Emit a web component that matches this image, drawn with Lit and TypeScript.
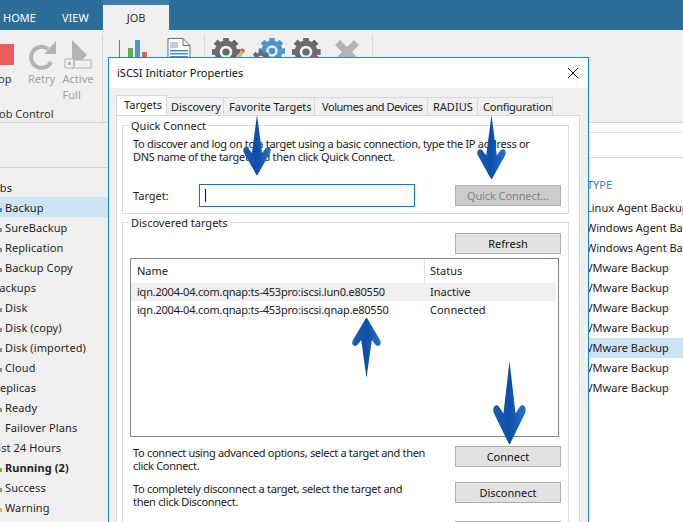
import { LitElement, html, css, svg } from "lit"
import { customElement } from "lit/decorators.js"

type Row = { label: string; tone?: string; active?: boolean; bold?: boolean; shift?: number }

const SIDEBAR: Row[] = [
  { label: "Jobs", shift: -10 },
  { label: "Backup", tone: "blue", active: true },
  { label: "SureBackup", tone: "grey" },
  { label: "Replication", tone: "grey" },
  { label: "Backup Copy", tone: "grey" },
  { label: "Backups", shift: -8 },
  { label: "Disk", tone: "grey" },
  { label: "Disk (copy)", tone: "grey" },
  { label: "Disk (imported)", tone: "grey" },
  { label: "Cloud", tone: "grey" },
  { label: "Replicas", shift: -7 },
  { label: "Ready", tone: "green" },
  { label: "Failover Plans" },
  { label: "Last 24 Hours", shift: -11 },
  { label: "Running (2)", tone: "green", bold: true },
  { label: "Success", tone: "green" },
  { label: "Warning", tone: "amber" },
]

const TYPES = [
  "Linux Agent Backup",
  "Windows Agent Backup",
  "Windows Agent Backup",
  "VMware Backup",
  "VMware Backup",
  "VMware Backup",
  "VMware Backup",
  "VMware Backup",
  "VMware Backup",
  "VMware Backup",
]

const TABS = ["Discovery", "Favorite Targets", "Volumes and Devices", "RADIUS", "Configuration"]

// ribbon gear: ring plus eight teeth, with a solid hub
const gear = (cx: number, cy: number, r: number, fill: string) => svg`
  ${[0, 45, 90, 135, 180, 225, 270, 315].map(
    (a) => svg`<rect x=${cx - r * 0.24} y=${cy - r * 1.22} width=${r * 0.48} height=${r * 0.5} fill=${fill}
      transform="rotate(${a} ${cx} ${cy})" />`,
  )}
  <circle cx=${cx} cy=${cy} r=${r * 0.74} fill="none" stroke=${fill} stroke-width=${r * 0.42} />
  <circle cx=${cx} cy=${cy} r=${r * 0.3} fill=${fill} />
`

@customElement("app-root")
export class AppRoot extends LitElement {
  static styles = css`
    :host {
      display: block;
      position: relative;
      width: 683px;
      height: 522px;
      overflow: hidden;
      background: #f0f0f0;
      font-family: "Noto Sans", "Open Sans", sans-serif;
      font-size: 11px;
      color: #1a1a1a;
    }

    .menu {
      display: flex;
      height: 30px;
      background: #2c6d99;
      padding-left: 3px;
      box-sizing: border-box;
    }
    .menu-tab {
      color: #fff;
      line-height: 35px;
      width: 59px;
    }
    .menu-tab.view {
      width: 41px;
    }
    .menu-tab.job {
      width: 66px;
      height: 30px;
      box-sizing: border-box;
      background: #f0f0f0;
      border-top: 5px solid #3f7dab;
      color: #333;
      text-align: center;
      line-height: 25px;
    }

    .ribbon {
      display: flex;
      height: 92px;
      border-bottom: 1px solid #d4d4d4;
    }
    .ribbon-group {
      display: flex;
      flex-direction: column;
      width: 103px;
      height: 88px;
      margin-top: 4px;
      box-sizing: border-box;
      border-right: 1px solid #d9d9d9;
    }
    .ribbon-buttons {
      display: flex;
      flex: none;
      height: 72px;
    }
    .ribbon-button {
      display: flex;
      flex-direction: column;
      align-items: center;
      line-height: 16px;
      color: #a0a0a0;
    }
    .ribbon-button svg {
      display: block;
      margin-top: 6px;
      margin-bottom: 1px;
    }
    .ribbon-button.stop {
      width: 27px;
      align-items: flex-start;
      color: #333;
    }
    .stop-square {
      width: 14px;
      height: 21px;
      margin: 10px 0 6px;
      background: #eb5d5d;
    }
    .stop-label {
      margin-left: -12px;
    }
    .ribbon-button.retry {
      width: 29px;
    }
    .ribbon-button.full {
      width: 44px;
    }
    .ribbon-caption {
      margin-left: -4px;
      line-height: 16px;
      color: #333;
      white-space: nowrap;
    }
    .ribbon-tools {
      display: flex;
      width: 102px;
      height: 88px;
      margin-top: 4px;
      padding: 4px 0 0 16px;
      gap: 18px;
      box-sizing: border-box;
      border-right: 1px solid #d9d9d9;
    }
    .ribbon-gears {
      display: flex;
      width: 168px;
      height: 88px;
      margin-top: 4px;
      padding: 4px 0 0 7px;
      gap: 7px;
      box-sizing: border-box;
      border-right: 1px solid #d9d9d9;
    }

    .content {
      display: flex;
      height: 399px;
    }
    .sidebar {
      width: 330px;
      flex: none;
      padding-top: 44px;
      box-sizing: border-box;
    }
    .sidebar-head {
      border-top: 1px solid #d4d4d4;
      height: 9px;
    }
    .side-row {
      display: flex;
      align-items: center;
      height: 20px;
      white-space: nowrap;
      letter-spacing: 0.1px;
      color: #1f1f1f;
    }
    .side-row.active {
      background: #cde4f7;
    }
    .side-row.bold {
      font-weight: 700;
    }
    .side-dot {
      width: 2px;
      height: 4px;
      margin: 6px 3px 0 0;
      flex: none;
    }
    .side-dot.blue {
      background: #3a8fd0;
    }
    .side-dot.grey {
      background: #8a8a8a;
    }
    .side-dot.green {
      background: #6cb33f;
    }
    .side-dot.amber {
      background: #e5b13a;
    }
    .main {
      flex: 1;
      background: #fff;
    }
    .main-strip {
      height: 9px;
      border-bottom: 1px solid #e2e2e2;
    }
    .main-head {
      height: 24px;
      border-bottom: 1px solid #d9d9d9;
    }
    .type-head {
      height: 40px;
      line-height: 54px;
      padding-left: 257px;
      color: #3e7dab;
    }
    .type-row {
      height: 20px;
      line-height: 20px;
      padding-left: 256px;
      white-space: nowrap;
    }
    .type-row.active {
      background: #cde4f7;
    }

    .dialog {
      position: absolute;
      left: 108px;
      top: 57px;
      width: 481px;
      height: 480px;
      box-sizing: border-box;
      border: 1px solid #1883d7;
      background: #f0f0f0;
    }
    .dialog-title {
      display: flex;
      align-items: center;
      justify-content: space-between;
      height: 30px;
      padding: 0 10px 2px 8px;
      box-sizing: border-box;
      background: #fff;
      color: #111;
    }
    .dialog-title svg {
      display: block;
      margin-top: 1px;
    }
    .tabs {
      display: flex;
      align-items: flex-end;
      height: 27px;
      padding-left: 7px;
    }
    .tab {
      height: 18px;
      line-height: 17px;
      padding: 0 0 0 5px;
      box-sizing: border-box;
      border: 1px solid #d9d9d9;
      border-bottom: 0;
      border-left: 0;
      white-space: nowrap;
    }
    .tab.active {
      width: 51px;
      height: 20px;
      line-height: 18px;
      background: #fff;
      border-left: 1px solid #d9d9d9;
      padding-left: 7px;
    }
    .tab.t1 {
      width: 57px;
      padding-left: 4px;
    }
    .tab.t2 {
      width: 91px;
    }
    .tab.t3 {
      width: 113px;
      padding-left: 7px;
      letter-spacing: -0.45px;
    }
    .tab.t4 {
      width: 50px;
    }
    .tab.t5 {
      width: 75px;
      letter-spacing: -0.2px;
    }
    .panel {
      margin-left: 7px;
      width: 464px;
      height: 430px;
      box-sizing: border-box;
      padding: 9px 10px 0 5px;
      background: #fff;
      border: 1px solid #d9d9d9;
    }
    .group-box {
      position: relative;
      border: 1px solid #dcdcdc;
      box-sizing: border-box;
    }
    .legend {
      position: absolute;
      left: 6px;
      top: -8px;
      padding: 0 2px;
      line-height: 16px;
      background: #fff;
    }
    .quick {
      height: 89px;
      padding: 11px 7px 0 10px;
      line-height: 13px;
      white-space: nowrap;
    }
    .quick-text {
      letter-spacing: -0.3px;
    }
    .target-row {
      display: flex;
      align-items: center;
      margin-top: 21px;
    }
    .target-label {
      width: 66px;
    }
    .target-input {
      display: flex;
      align-items: center;
      width: 216px;
      height: 23px;
      box-sizing: border-box;
      border: 1px solid #0078d7;
      padding-left: 5px;
    }
    .caret {
      width: 1px;
      height: 13px;
      background: #111;
    }
    .btn {
      display: flex;
      flex: none;
      align-items: center;
      justify-content: center;
      width: 106px;
      height: 21px;
      box-sizing: border-box;
      border: 1px solid #adadad;
      background: #e1e1e1;
      color: #111;
    }
    .btn.disabled {
      background: #cccccc;
      color: #838383;
      letter-spacing: -0.1px;
    }
    .target-row .btn {
      margin-left: 40px;
    }
    .discovered {
      margin-top: 8px;
      height: 340px;
      padding: 10px 7px 0 7px;
    }
    .refresh-row {
      display: flex;
      justify-content: flex-end;
    }
    .list {
      width: 429px;
      height: 179px;
      margin-top: 4px;
      box-sizing: border-box;
      border: 1px solid #82829a;
      padding: 0 2px 0 0;
    }
    .list-row {
      display: grid;
      grid-template-columns: 293px 1fr;
      height: 17.5px;
      line-height: 17px;
      letter-spacing: -0.22px;
    }
    .list-row span {
      padding-left: 6px;
      white-space: nowrap;
    }
    .list-row span + span {
      letter-spacing: 0;
    }
    .list-head {
      height: 24px;
      line-height: 24px;
      letter-spacing: 0;
    }
    .list-head span + span {
      border-left: 1px solid #e5e5e5;
      padding-left: 5px;
    }
    .list-row.selected {
      background: #f0f0f0;
    }
    .actions {
      margin-top: 9px;
    }
    .action {
      display: flex;
      justify-content: space-between;
      align-items: flex-start;
      height: 36px;
      padding-left: 3px;
      line-height: 13px;
    }
    .action.last {
      margin-top: 3px;
    }
    .action p {
      margin: 0;
      white-space: nowrap;
      letter-spacing: -0.3px;
    }

    .arrow {
      position: absolute;
      display: block;
      pointer-events: none;
    }
  `

  private arrow(x: number, y: number, w: number, h: number, up = false) {
    const style = `left:${x}px;top:${y}px;width:${w}px;height:${h}px;${up ? "transform:scaleY(-1);" : ""}`
    return html`<svg class="arrow" style=${style} viewBox="0 0 30 60" preserveAspectRatio="none">
      <defs>
        <linearGradient id="arrow-fill" x1="0" x2="1" y1="0" y2="0">
          <stop offset="0" stop-color="#1c5cb4" />
          <stop offset="0.5" stop-color="#0b4fa9" />
          <stop offset="1" stop-color="#2f72cc" />
        </linearGradient>
      </defs>
      <path
        d="M15 0 L20.5 38 L24.5 33 Q27 31 29 33 Q30.5 35 29 38 L15.5 60 L14.5 60 L1 38 Q-.5 35 1 33 Q3 31 5.500 33 L9.5 38 Z"
        fill="url(#arrow-fill)"
      />
    </svg>`
  }

  render() {
    return html`
      <div class="menu">
        <div class="menu-tab">HOME</div>
        <div class="menu-tab view">VIEW</div>
        <div class="menu-tab job">JOB</div>
      </div>
      <div class="ribbon">
        <div class="ribbon-group">
          <div class="ribbon-buttons">
            <div class="ribbon-button stop">
              <div class="stop-square"></div>
              <div class="stop-label">Stop</div>
            </div>
            <div class="ribbon-button retry">
              <svg width="30" height="30" viewBox="0 0 30 30">
                <path d="M24 22a10.500 10.500 0 1 1-3-13" fill="none" stroke="#b3b3b3" stroke-width="4" />
                <path d="M17 14h12V1z" fill="#b3b3b3" />
              </svg>
              <div>Retry</div>
            </div>
            <div class="ribbon-button full">
              <svg width="30" height="30" viewBox="0 0 30 30">
                <path d="M9 0l15 15-15 15z" fill="#b3b3b3" />
                <path d="M2 19h9v9H2zM11 20h17v8H11z" fill="#f0f0f0" stroke="#b3b3b3" />
                <path d="M5 22h3v3H5z" fill="#b3b3b3" />
              </svg>
              <div>Active<br />Full</div>
            </div>
          </div>
          <div class="ribbon-caption">Job Control</div>
        </div>
        <div class="ribbon-tools">
          <svg width="30" height="24" viewBox="0 0 30 24">
            <path d="M0 2h1v22H0z" fill="#777" />
            <path d="M9 10h5v14H9z" fill="#5cb04a" />
            <path d="M16 2h5v22h-5z" fill="#4a97d0" />
            <path d="M23 14h5v10h-5z" fill="#d9654a" />
          </svg>
          <svg width="25" height="24" viewBox="0 0 25 24">
            <path d="M1 .5h15l7 7V24H1z" fill="#fff" stroke="#6a6a6a" />
            <path d="M16 .5v7h7" fill="none" stroke="#6a6a6a" />
            <path d="M3 4h8v6H3z" fill="#b5d2ec" />
            <path d="M3 12h18v1.500H3zM3 15h18v1.500H3zM3 18h18v1.500H3zM3 21h18v1.500H3z" fill="#3f8fd0" />
          </svg>
        </div>
        <div class="ribbon-gears">
          <svg width="33" height="24" viewBox="0 0 33 24">
            ${gear(14, 14, 12, "#6a6a6a")}
            <path d="M21 22l8-9 3 2-8 9z" fill="#e6b45e" />
            <path d="M28 12l2-2 3 2-1 3z" fill="#d9654a" />
          </svg>
          <svg width="33" height="24" viewBox="0 0 33 24">
            ${gear(20, 13, 11, "#4a97d0")} ${gear(9, 22, 8, "#6a6a6a")}
          </svg>
          <svg width="33" height="24" viewBox="0 0 33 24">
            ${gear(14, 14, 12, "#6a6a6a")}
            <circle cx="22" cy="24" r="7" fill="#e0404a" />
          </svg>
          <svg width="30" height="24" viewBox="0 0 30 24">
            <path d="M3 7l5-5 7 7 7-7 5 5-7 7 7 7-5 5-7-7-7 7-5-5 7-7z" fill="#b3b3b3" />
          </svg>
        </div>
      </div>
      <div class="content">
        <div class="sidebar">
          <div class="sidebar-head"></div>
          ${SIDEBAR.map(
            (r) => html`<div class="side-row ${r.active ? "active" : ""} ${r.bold ? "bold" : ""}">
              ${r.shift
                ? html`<span style="margin-left:${r.shift}px">${r.label}</span>`
                : html`<span class="side-dot ${r.tone ?? ""}"></span><span>${r.label}</span>`}
            </div>`,
          )}
        </div>
        <div class="main">
          <div class="main-strip"></div>
          <div class="main-head"></div>
          <div class="type-head">TYPE</div>
          ${TYPES.map((t, i) => html`<div class="type-row ${i === 7 ? "active" : ""}">${t}</div>`)}
        </div>
      </div>

      <div class="dialog">
        <div class="dialog-title">
          <span>iSCSI Initiator Properties</span>
          <svg width="10" height="10" viewBox="0 0 10 10">
            <path d="M0 0l10 10M10 0L0 10" stroke="#111" fill="none" />
          </svg>
        </div>
        <div class="tabs">
          <div class="tab active">Targets</div>
          ${TABS.map((t, i) => html`<div class="tab t${i + 1}">${t}</div>`)}
        </div>
        <div class="panel">
          <div class="group-box quick">
            <div class="legend">Quick Connect</div>
            <div class="quick-text">
              To discover and log on to a target using a basic connection, type the IP address or<br />
              DNS name of the target and then click Quick Connect.
            </div>
            <div class="target-row">
              <div class="target-label">Target:</div>
              <div class="target-input"><div class="caret"></div></div>
              <div class="btn disabled">Quick Connect...</div>
            </div>
          </div>
          <div class="group-box discovered">
            <div class="legend">Discovered targets</div>
            <div class="refresh-row"><div class="btn">Refresh</div></div>
            <div class="list">
              <div class="list-row list-head"><span>Name</span><span>Status</span></div>
              <div class="list-row selected">
                <span>iqn.2004-04.com.qnap:ts-453pro:iscsi.lun0.e80550</span><span>Inactive</span>
              </div>
              <div class="list-row">
                <span>iqn.2004-04.com.qnap:ts-453pro:iscsi.qnap.e80550</span><span>Connected</span>
              </div>
            </div>
            <div class="actions">
              <div class="action">
                <p>To connect using advanced options, select a target and then<br />click Connect.</p>
                <div class="btn">Connect</div>
              </div>
              <div class="action">
                <p>To completely disconnect a target, select the target and<br />then click Disconnect.</p>
                <div class="btn">Disconnect</div>
              </div>
              <div class="action last"><span></span><div class="btn"></div></div>
            </div>
          </div>
        </div>
      </div>

      ${this.arrow(243, 115, 28, 60)} ${this.arrow(477, 115, 29, 64)} ${this.arrow(352, 318, 29, 60, true)}
      ${this.arrow(493, 361, 33, 83)}
    `
  }
}

declare global {
  interface HTMLElementTagNameMap {
    "app-root": AppRoot
  }
}
